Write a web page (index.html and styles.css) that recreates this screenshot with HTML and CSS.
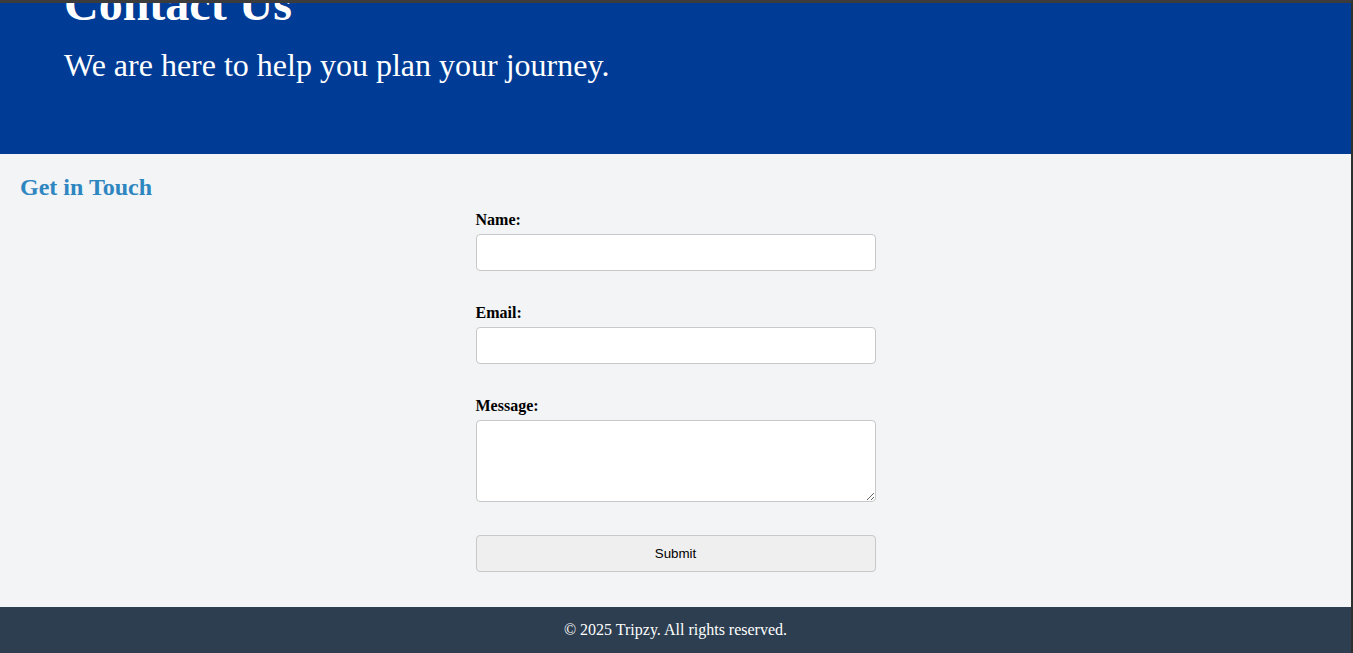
FILE: index.html
```html
<!DOCTYPE html>
<html lang="en">
<head>
<meta charset="utf-8">
<title>Contact Us - Tripzy</title>
<link rel="stylesheet" href="styles.css">
</head>
<body>
<div class="frame">
  <header class="hero">
    <h1 class="hero-title">Contact Us</h1>
    <p class="hero-sub">We are here to help you plan your journey.</p>
  </header>
  <main class="contact">
    <h2 class="contact-title">Get in Touch</h2>
    <form class="contact-form">
      <label class="field-label" for="name">Name:</label>
      <input class="field-input" type="text" id="name">
      <label class="field-label" for="email">Email:</label>
      <input class="field-input" type="email" id="email">
      <label class="field-label" for="message">Message:</label>
      <textarea class="field-area" id="message"></textarea>
      <button class="submit-btn" type="button">Submit</button>
    </form>
  </main>
  <footer class="site-footer">
    <p class="footer-text">© 2025 Tripzy. All rights reserved.</p>
  </footer>
</div>
</body>
</html>
```

FILE: styles.css
```css
html, body {
  margin: 0;
  padding: 0;
}
body {
  background: #3a3a3a;
  font-family: "Liberation Serif", "Times New Roman", serif;
  height: 653px;
  overflow: hidden;
}
.frame {
  border-top: 3px solid #3c3c3c;
  border-right: 2px solid #2f2f2f;
  display: flex;
  flex-direction: column;
}
.hero {
  background: #003c96;
  color: #fff;
  height: 151px;
  padding: 0 64px;
  overflow: hidden;
  box-sizing: border-box;
}
.hero-title {
  font-size: 48px;
  font-weight: bold;
  margin: -26px 0 0 0;
  line-height: 53px;
}
.hero-sub {
  font-size: 32px;
  margin: 17px 0 0 0;
  line-height: 36px;
}
.contact {
  background: #f3f4f6;
  padding: 20px 20px 35px;
}
.contact-title {
  font-size: 24px;
  font-weight: bold;
  color: #2e86c1;
  margin: 0 0 10px 0;
  line-height: 27px;
}
.contact-form {
  width: 400px;
  margin: 0 auto;
  display: flex;
  flex-direction: column;
}
.field-label {
  font-size: 16px;
  font-weight: bold;
  line-height: 18px;
  margin-bottom: 5px;
}
.field-input, .field-area {
  box-sizing: border-box;
  width: 100%;
  border: 1px solid #c8c8c8;
  border-radius: 4px;
  background: #fff;
  padding: 10px;
  font-family: "Liberation Sans", Arial, sans-serif;
  font-size: 13.33px;
  margin: 0 0 33px 0;
}
.field-input {
  height: 37px;
}
.field-area {
  height: 82px;
  resize: vertical;
}
.submit-btn {
  box-sizing: border-box;
  width: 100%;
  height: 37px;
  background: #efefef;
  border: 1px solid #c8c8c8;
  border-radius: 4px;
  font-family: "Liberation Sans", Arial, sans-serif;
  font-size: 13.33px;
  color: #000;
  padding: 0;
}
.site-footer {
  background: #2c3e50;
  color: #fff;
  text-align: center;
  padding: 14px 0;
}
.footer-text {
  margin: 0;
  font-size: 16px;
  line-height: 18px;
}
```
